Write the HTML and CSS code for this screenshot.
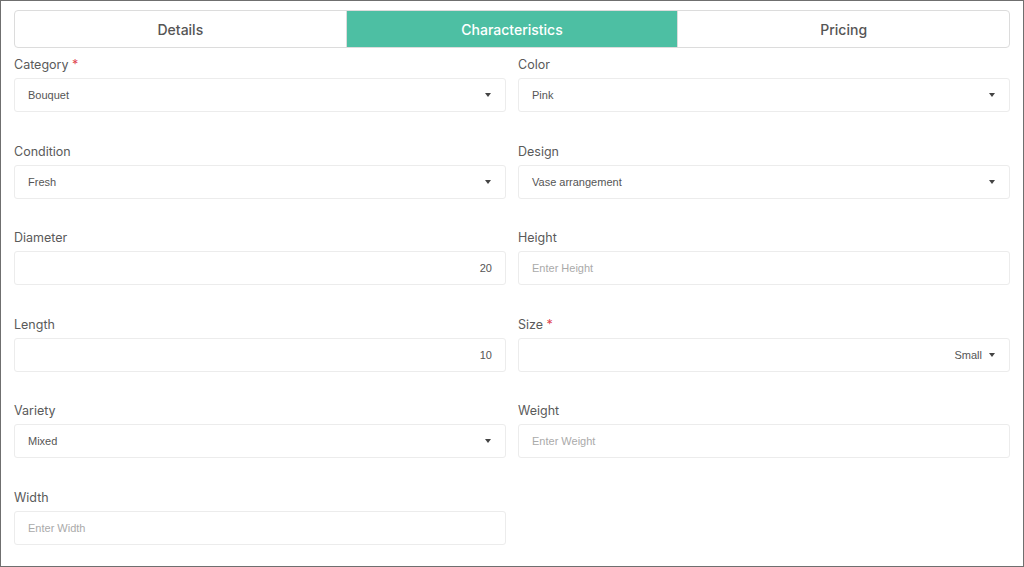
FILE: index.html
```html
<!DOCTYPE html>
<html>
<head>
    <meta charset="UTF-8" />
    <title>Product Characteristics</title>
    <link rel="stylesheet" href="styles.css">
</head>
<body>
    <div class="frame">
        <div class="tabs">
            <div class="tab">Details</div>
            <div class="tab active">Characteristics</div>
            <div class="tab">Pricing</div>
        </div>

        <div class="form-grid">
            <div class="field">
                <label>Category <span class="req">*</span></label>
                <div class="box select"><span>Bouquet</span><i class="caret"></i></div>
            </div>
            <div class="field">
                <label>Color</label>
                <div class="box select"><span>Pink</span><i class="caret"></i></div>
            </div>

            <div class="field">
                <label>Condition</label>
                <div class="box select"><span>Fresh</span><i class="caret"></i></div>
            </div>
            <div class="field">
                <label>Design</label>
                <div class="box select"><span>Vase arrangement</span><i class="caret"></i></div>
            </div>

            <div class="field">
                <label>Diameter</label>
                <div class="box number"><span>20</span></div>
            </div>
            <div class="field">
                <label>Height</label>
                <div class="box"><span class="placeholder">Enter Height</span></div>
            </div>

            <div class="field">
                <label>Length</label>
                <div class="box number"><span>10</span></div>
            </div>
            <div class="field">
                <label>Size <span class="req">*</span></label>
                <div class="box select right"><span>Small</span><i class="caret"></i></div>
            </div>

            <div class="field">
                <label>Variety</label>
                <div class="box select"><span>Mixed</span><i class="caret"></i></div>
            </div>
            <div class="field">
                <label>Weight</label>
                <div class="box"><span class="placeholder">Enter Weight</span></div>
            </div>

            <div class="field">
                <label>Width</label>
                <div class="box"><span class="placeholder">Enter Width</span></div>
            </div>
        </div>
    </div>
</body>
</html>
```

FILE: styles.css
```css
body { margin: 0; font-family: "Inter", "Noto Sans", sans-serif; background: #fff; }

.frame {
    box-sizing: border-box;
    width: 1024px;
    height: 567px;
    border: 1px solid #6f6f6f;
    padding: 9px 13px 0 13px;
}

/* tab strip */
.tabs {
    display: flex;
    height: 38px;
    border: 1px solid #dcdcdc;
    border-radius: 4px;
    overflow: hidden;
    box-sizing: border-box;
}
.tab {
    flex: 1;
    display: flex;
    align-items: center;
    justify-content: center;
    font-size: 14px;
    font-weight: 500;
    color: #555;
    border-left: 1px solid #dcdcdc;
}
.tab:first-child { border-left: none; }
.tab.active { background: #4dbfa3; color: #fff; }

/* form */
.form-grid {
    display: grid;
    grid-template-columns: 1fr 1fr;
    column-gap: 12px;
    margin-top: 9px;
}
.field { margin-bottom: 31.6px; }
.field label {
    display: block;
    height: 16px;
    line-height: 16px;
    font-size: 12.5px;
    color: #5a5a5a;
    margin-bottom: 5px;
}
.req { color: #e0454f; }

.box {
    box-sizing: border-box;
    height: 34px;
    border: 1px solid #ececec;
    border-radius: 3px;
    display: flex;
    align-items: center;
    padding: 0 13px;
    font-family: "Liberation Sans", Arial, sans-serif;
    font-size: 11px;
    color: #555;
}
.box.select { justify-content: space-between; }
.box.select.right { justify-content: flex-end; gap: 7px; }
.box.number { justify-content: flex-end; }
.placeholder { color: #aaa; }

.caret {
    width: 0;
    height: 0;
    border-left: 3.5px solid transparent;
    border-right: 3.5px solid transparent;
    border-top: 4px solid #444;
    margin-right: 1px;
}
```
